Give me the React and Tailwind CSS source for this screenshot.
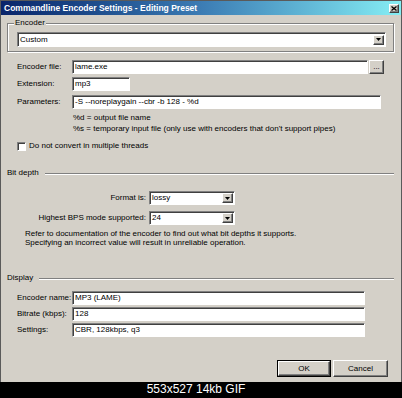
const sunken =
  "border-t border-l border-t-[#808080] border-l-[#808080] border-b border-r border-b-white border-r-white shadow-[inset_1px_1px_0_#404040] bg-white";
const raised =
  "border-t border-l border-t-white border-l-white border-b border-r border-b-[#404040] border-r-[#404040] shadow-[inset_-1px_-1px_0_#808080] bg-[#d4d0c8]";

function Arrow() {
  return (
    <div className={`${raised} w-[11px] h-[10px] flex items-center justify-center mr-[1px]`}>
      <svg width="5" height="3" viewBox="0 0 5 3">
        <path d="M0 0h5L2.5 3z" fill="#000" />
      </svg>
    </div>
  );
}

function Combo({ value, className }) {
  return (
    <div className={`${sunken} ${className} flex items-center justify-between`}>
      <span className="pl-[2px]">{value}</span>
      <Arrow />
    </div>
  );
}

function Field({ label, value, width, extra }) {
  return (
    <div className="flex items-center pl-[10px]">
      <span className="w-[55px]">{label}</span>
      <div className={`${sunken} h-[14px] flex items-center ${width}`}>
        <span className="pl-[2px]">{value}</span>
      </div>
      {extra}
    </div>
  );
}

function Section({ label }) {
  return (
    <div className="flex items-center h-[10px]">
      <span>{label}</span>
      <div className="flex-1 ml-[6px] border-t border-[#808080] shadow-[0_1px_0_#fff]" />
    </div>
  );
}

export default function App() {
  return (
    <div className="w-[402px] h-[398px] flex flex-col bg-black font-['Liberation_Sans',Arial,sans-serif] text-[8px] leading-[10px] text-black">
      <div className="h-[382px] flex flex-col bg-[#d4d0c8] border border-b-0 border-[#5a5a5a]">
        <div className="h-[14px] flex items-center justify-between bg-gradient-to-r from-[#0a246a] via-[#3c7cb4] to-[#86eef4] pl-[3px] pr-[2px]">
          <span className="text-white font-bold text-[8.5px]">
            Commandline Encoder Settings - Editing Preset
          </span>
          <div className={`${raised} w-[10px] h-[9px] flex items-center justify-center`}>
            <svg width="6" height="5" viewBox="0 0 6 5">
              <path d="M0.5 0.5L5.5 4.5M5.5 0.5L0.5 4.5" stroke="#000" strokeWidth="1.3" />
            </svg>
          </div>
        </div>

        <div className="flex-1 flex flex-col pl-[6px] pr-[7px]">
          <fieldset className="mt-[3px] border border-[#808080] shadow-[inset_1px_1px_0_#fff,1px_1px_0_#fff] pl-[9px] pr-[7px] pt-[4px] pb-[4px]">
            <legend className="px-[1px] bg-[#d4d0c8] ml-[-3px]">Encoder</legend>
            <Combo value="Custom" className="h-[15px]" />
          </fieldset>

          <div className="mt-[8px] flex flex-col">
            <Field
              label="Encoder file:"
              value="lame.exe"
              width="w-[296px]"
              extra={
                <div className={`${raised} ml-[1px] w-[15px] h-[14px] flex items-center justify-center`}>
                  <span className="leading-none">...</span>
                </div>
              }
            />
            <div className="mt-[3px]">
              <Field label="Extension:" value="mp3" width="w-[58px]" />
            </div>
            <div className="mt-[4px]">
              <Field label="Parameters:" value="-S --noreplaygain --cbr -b 128 - %d" width="w-[309px]" />
            </div>
            <div className="mt-[3px] pl-[66px] leading-[11px]">
              <p>%d = output file name</p>
              <p>%s = temporary input file (only use with encoders that don't support pipes)</p>
            </div>
            <div className="mt-[7px] pl-[10px] flex items-center">
              <div className={`${sunken} w-[9px] h-[9px]`} />
              <span className="ml-[3px]">Do not convert in multiple threads</span>
            </div>
          </div>

          <div className="mt-[17px]">
            <Section label="Bit depth" />
          </div>

          <div className="mt-[13px] flex items-center">
            <span className="w-[139px] text-right">Format is:</span>
            <Combo value="lossy" className="ml-[3px] w-[86px] h-[14px]" />
          </div>
          <div className="mt-[6px] flex items-center">
            <span className="w-[139px] text-right">Highest BPS mode supported:</span>
            <Combo value="24" className="ml-[3px] w-[86px] h-[14px]" />
          </div>
          <div className="mt-[4px] pl-[18px] leading-[9px]">
            <p>Refer to documentation of the encoder to find out what bit depths it supports.</p>
            <p>Specifying an incorrect value will result in unreliable operation.</p>
          </div>

          <div className="mt-[26px]">
            <Section label="Display" />
          </div>

          <div className="mt-[8px] flex flex-col gap-[2px]">
            <Field label="Encoder name:" value="MP3 (LAME)" width="w-[293px]" />
            <Field label="Bitrate (kbps):" value="128" width="w-[293px]" />
            <Field label="Settings:" value="CBR, 128kbps, q3" width="w-[293px]" />
          </div>

          <div className="mt-[23px] flex justify-end gap-[2px] pr-[6px]">
            <div className="border border-black">
              <div className={`${raised} w-[52px] h-[15px] flex items-center justify-center`}>OK</div>
            </div>
            <div className={`${raised} w-[55px] h-[17px] flex items-center justify-center`}>Cancel</div>
          </div>
        </div>
      </div>
      <div className="flex-1 flex items-start justify-center pr-[10px] text-white text-[12px] leading-[12px] pt-[1px]">
        553x527 14kb GIF
      </div>
    </div>
  );
}
